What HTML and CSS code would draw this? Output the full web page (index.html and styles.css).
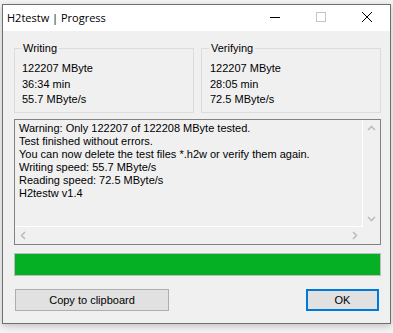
FILE: index.html
```html
<!DOCTYPE html>
<html>
<head>
<meta charset="utf-8">
<link rel="stylesheet" href="styles.css">
</head>
<body>
<div class="window">
  <div class="titlebar">
    <span class="title">H2testw | Progress</span>
    <div class="caps">
      <span class="cap"><svg width="10" height="10" viewBox="0 0 10 10"><line x1="0" y1="5.5" x2="10" y2="5.5" stroke="#000" stroke-width="1"/></svg></span>
      <span class="cap"><svg width="10" height="10" viewBox="0 0 10 10"><rect x="0.5" y="0.5" width="9" height="9" fill="none" stroke="#c4c4c4" stroke-width="1"/></svg></span>
      <span class="cap"><svg width="10" height="10" viewBox="0 0 10 10"><path d="M0 0 L10 10 M10 0 L0 10" stroke="#000" stroke-width="1"/></svg></span>
    </div>
  </div>
  <div class="client">
    <div class="groups">
      <fieldset class="group">
        <legend>Writing</legend>
        <div class="val">122207 MByte</div>
        <div class="val">36:34 min</div>
        <div class="val">55.7 MByte/s</div>
      </fieldset>
      <fieldset class="group group-right">
        <legend>Verifying</legend>
        <div class="val">122207 MByte</div>
        <div class="val">28:05 min</div>
        <div class="val">72.5 MByte/s</div>
      </fieldset>
    </div>
    <div class="log">
      <div class="log-text">
        <div>Warning: Only 122207 of 122208 MByte tested.</div>
        <div>Test finished without errors.</div>
        <div>You can now delete the test files *.h2w or verify them again.</div>
        <div>Writing speed: 55.7 MByte/s</div>
        <div>Reading speed: 72.5 MByte/s</div>
        <div>H2testw v1.4</div>
      </div>
      <div class="vscroll">
        <svg width="17" height="17" viewBox="0 0 17 17"><polyline points="5,10 8.5,6.5 12,10" fill="none" stroke="#bdbdbd" stroke-width="1.6"/></svg>
        <svg width="17" height="17" viewBox="0 0 17 17"><polyline points="5,7 8.5,10.5 12,7" fill="none" stroke="#bdbdbd" stroke-width="1.6"/></svg>
      </div>
      <div class="hscroll">
        <svg width="17" height="17" viewBox="0 0 17 17"><polyline points="10,5 6.5,8.5 10,12" fill="none" stroke="#bdbdbd" stroke-width="1.6"/></svg>
        <svg width="17" height="17" viewBox="0 0 17 17"><polyline points="7,5 10.5,8.5 7,12" fill="none" stroke="#bdbdbd" stroke-width="1.6"/></svg>
      </div>
      <div class="corner"></div>
    </div>
    <div class="progress"><div class="fill" style="width:100%"></div></div>
    <div class="buttons">
      <button class="btn btn-copy">Copy to clipboard</button>
      <button class="btn btn-ok">OK</button>
    </div>
  </div>
</div>
</body>
</html>
```
FILE: styles.css
```css
html, body {
  margin: 0;
  padding: 0;
}
body {
  background: #f4f4f4;
  width: 393px;
  height: 333px;
  overflow: hidden;
  font-family: "Liberation Sans", Arial, sans-serif;
  font-size: 11px;
  color: #000;
}
.window {
  margin: 4px 0 0 2px;
  width: 389px;
  height: 320px;
  box-sizing: border-box;
  border: 1px solid #6f6f6f;
  background: #f0f0f0;
  display: flex;
  flex-direction: column;
  box-shadow: 0 2px 7px rgba(0, 0, 0, 0.22);
}
.titlebar {
  height: 26px;
  flex: none;
  background: #fff;
  display: flex;
  align-items: center;
  justify-content: space-between;
}
.title {
  font-family: "Open Sans", "Noto Sans", sans-serif;
  font-size: 11px;
  padding-left: 4px;
  padding-bottom: 1px;
}
.caps {
  display: flex;
  height: 100%;
}
.cap {
  width: 46px;
  display: flex;
  align-items: center;
  justify-content: center;
  padding-bottom: 2px;
}
.cap svg {
  display: block;
}
.client {
  flex: 1;
  display: flex;
  flex-direction: column;
  padding: 11px 9px 12px 11px;
}
.groups {
  display: grid;
  grid-template-columns: 1fr 1fr;
  column-gap: 7px;
}
.group {
  margin: 0;
  min-width: 0;
  border: 1px solid #dcdcdc;
  padding: 6px 4px 4px 7px;
}
.group-right {
  padding-left: 8px;
}
.group legend {
  padding: 0 2px;
  margin-left: -1px;
  line-height: 13px;
}
.val {
  line-height: 15.5px;
}
.log {
  margin-top: 6px;
  height: 126px;
  box-sizing: border-box;
  border: 1px solid #828282;
  display: grid;
  grid-template-columns: 1fr 17px;
  grid-template-rows: 1fr 17px;
  flex: none;
}
.log-text {
  border-right: 1px solid #fff;
  border-bottom: 1px solid #fff;
  padding: 2px 4px;
  line-height: 13px;
  white-space: nowrap;
  overflow: hidden;
}
.vscroll {
  display: flex;
  flex-direction: column;
  justify-content: space-between;
}
.hscroll {
  display: flex;
  justify-content: space-between;
}
.vscroll svg, .hscroll svg {
  display: block;
}
.corner {
  background: #f0f0f0;
}
.progress {
  margin-top: 8px;
  height: 23px;
  box-sizing: border-box;
  border: 1px solid #bcbcbc;
  background: #e6e6e6;
  flex: none;
}
.fill {
  height: 100%;
  background: #06b025;
}
.buttons {
  margin-top: 13px;
  display: flex;
  justify-content: space-between;
  flex: none;
}
.btn {
  height: 22px;
  box-sizing: border-box;
  background: #e1e1e1;
  border: 1px solid #adadad;
  font-family: "Liberation Sans", Arial, sans-serif;
  font-size: 11px;
  color: #000;
  padding: 0;
  border-radius: 0;
}
.btn-copy {
  width: 154px;
  margin-left: 1px;
}
.btn-ok {
  width: 73px;
  margin-right: 2px;
  border: 2px solid #0078d7;
}
```
